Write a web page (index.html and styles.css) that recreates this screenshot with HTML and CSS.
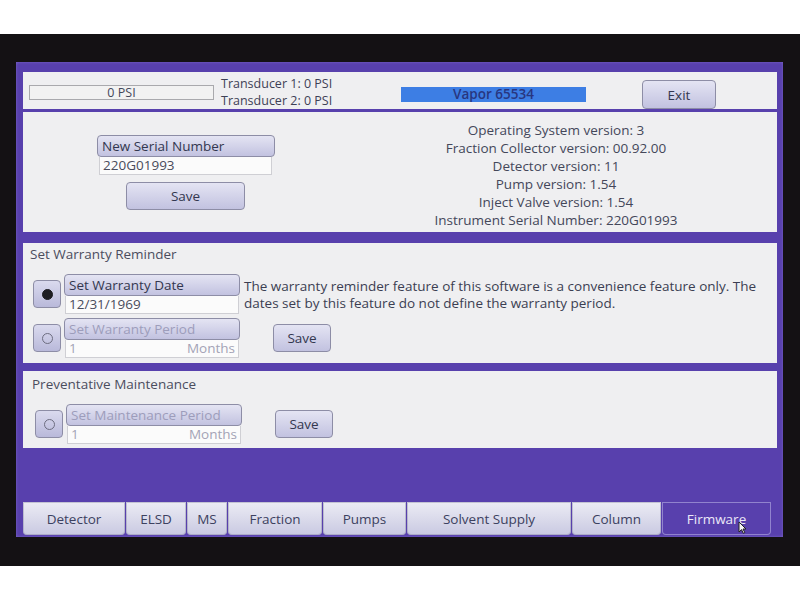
FILE: index.html
```html
<!DOCTYPE html>
<html lang="en">
<head>
  <meta charset="UTF-8">
  <meta name="viewport" content="width=device-width, initial-scale=1.0">
  <title>Firmware</title>
  <link rel="stylesheet" href="styles.css">
</head>
<body>
  <div class="bezel">
    <div class="screen">

      <div class="panel top-bar">
        <div class="psi-box">0 PSI</div>
        <div class="transducers">
          <div>Transducer 1: 0 PSI</div>
          <div>Transducer 2: 0 PSI</div>
        </div>
        <div class="device-name">Vapor 65534</div>
        <button class="btn exit-btn">Exit</button>
      </div>

      <div class="panel serial-panel">
        <div class="serial-form">
          <div class="field-header">New Serial Number</div>
          <div class="field-input serial-input">220G01993</div>
          <button class="btn serial-save">Save</button>
        </div>
        <div class="versions">
          <div>Operating System version: 3</div>
          <div>Fraction Collector version: 00.92.00</div>
          <div>Detector version: 11</div>
          <div>Pump version: 1.54</div>
          <div>Inject Valve version: 1.54</div>
          <div>Instrument Serial Number: 220G01993</div>
        </div>
      </div>

      <div class="panel section warranty-panel">
        <div class="section-title">Set Warranty Reminder</div>
        <div class="option-grid">
          <button class="radio checked"><span class="dot"></span></button>
          <div class="field">
            <div class="field-header">Set Warranty Date</div>
            <div class="field-input">12/31/1969</div>
          </div>
          <p class="note">The warranty reminder feature of this software is a convenience feature only. The<br>dates set by this feature do not define the warranty period.</p>

          <button class="radio"><span class="dot"></span></button>
          <div class="field">
            <div class="field-header disabled">Set Warranty Period</div>
            <div class="field-input disabled"><span>1</span><span>Months</span></div>
          </div>
          <button class="btn small-save">Save</button>
        </div>
      </div>

      <div class="panel section maintenance-panel">
        <div class="section-title">Preventative Maintenance</div>
        <div class="option-grid">
          <button class="radio"><span class="dot"></span></button>
          <div class="field">
            <div class="field-header disabled">Set Maintenance Period</div>
            <div class="field-input disabled"><span>1</span><span>Months</span></div>
          </div>
          <button class="btn small-save">Save</button>
        </div>
      </div>

      <nav class="tabs">
        <div class="tab tab-detector">Detector</div>
        <div class="tab tab-elsd">ELSD</div>
        <div class="tab tab-ms">MS</div>
        <div class="tab tab-fraction">Fraction</div>
        <div class="tab tab-pumps">Pumps</div>
        <div class="tab tab-solvent">Solvent Supply</div>
        <div class="tab tab-column">Column</div>
        <div class="tab tab-firmware active">
          Firmware
          <svg class="pointer" width="9" height="13" viewBox="0 0 9 13">
            <path d="M1 1 L1 11 L3.5 8.6 L5.3 12.3 L6.8 11.6 L5 8 L8 8 Z" fill="#f4f4f4" stroke="#222" stroke-width="1"/>
          </svg>
        </div>
      </nav>

    </div>
  </div>
</body>
</html>
```

FILE: styles.css
```css
:root {
  --screen-purple: #5840ad;
  --panel-bg: #efeff1;
  --text-color: #3e4156;
  --button-top: #e4e4f3;
  --button-bottom: #c2c2e0;
  --button-border: #8d8da6;
}

* {
  box-sizing: border-box;
}

body {
  margin: 0;
  background: #ffffff;
  font-family: 'Open Sans', 'DejaVu Sans', sans-serif;
  font-size: 13.5px;
  color: var(--text-color);
}

.bezel {
  margin-top: 34px;
  height: 532px;
  background: #141114;
  padding: 28px 17px 29px 16px;
}

.screen {
  position: relative;
  height: 475px;
  background: var(--screen-purple);
  padding: 10px 6px 2px 7px;
  display: flex;
  flex-direction: column;
  box-shadow: inset 0 0 3px rgba(150, 130, 220, 0.6);
}

.panel {
  background: var(--panel-bg);
}

/* buttons share the lavender touch-screen look */
.btn {
  font-family: inherit;
  font-size: 13.5px;
  color: #33374f;
  background: linear-gradient(180deg, var(--button-top) 0%, var(--button-bottom) 100%);
  border: 1px solid var(--button-border);
  border-radius: 4px;
  padding: 0;
  cursor: pointer;
}

/* top status bar */
.top-bar {
  height: 37px;
  display: flex;
  align-items: center;
  padding-left: 6px;
}

.psi-box {
  width: 185px;
  height: 15px;
  margin-top: 4px;
  border: 1px solid #a9a9ad;
  background: #f2f2f2;
  text-align: center;
  font-size: 12.5px;
  line-height: 13px;
  color: #45475a;
}

.transducers {
  width: 180px;
  margin-left: 7px;
  margin-top: 2px;
  font-size: 12.5px;
  line-height: 17px;
}

.device-name {
  width: 185px;
  height: 15px;
  margin-top: 8px;
  background: #3d7ee4;
  color: #283680;
  text-align: center;
  font-weight: 600;
  line-height: 15px;
}

.exit-btn {
  width: 74px;
  height: 29px;
  margin-left: 56px;
  margin-top: 8px;
}

/* serial number + versions */
.serial-panel {
  height: 120px;
  margin-top: 3px;
  display: flex;
}

.serial-form {
  width: 178px;
  margin-left: 74px;
  padding-top: 23px;
}

.field-header {
  height: 22px;
  padding-left: 4px;
  line-height: 20px;
  color: #33374f;
  white-space: nowrap;
  background: linear-gradient(180deg, var(--button-top) 0%, var(--button-bottom) 100%);
  border: 1px solid var(--button-border);
  border-radius: 4px;
}

.field-header.disabled {
  color: #9d9dbb;
}

.field-input {
  height: 18px;
  margin: 0 2px;
  padding: 0 3px;
  background: #fbfbfb;
  border: 1px solid #cfcfd4;
  border-top: none;
  line-height: 16px;
  color: #4a4c5c;
  display: flex;
  justify-content: space-between;
}

.field-input.disabled {
  color: #a3a3b6;
}

.serial-input {
  width: 173px;
}

.serial-save {
  display: block;
  width: 119px;
  height: 28px;
  margin: 7px 0 0 29px;
}

.versions {
  flex: 1;
  margin-left: 60px;
  padding-top: 9px;
  text-align: center;
  line-height: 18px;
  color: #44475a;
}

/* warranty and maintenance sections */
.section {
  padding: 2px 0 7px 7px;
}

.warranty-panel {
  height: 120px;
  margin-top: 11px;
}

.maintenance-panel {
  height: 77px;
  margin-top: 8px;
  padding-top: 4px;
  padding-left: 9px;
}

.section-title {
  line-height: 18px;
  color: #4b4d5e;
}

.option-grid {
  margin-top: 11px;
  display: grid;
  grid-template-columns: 28px 176px 1fr;
  column-gap: 3px;
  row-gap: 4px;
  align-items: center;
  padding-left: 3px;
}

.radio {
  width: 28px;
  height: 28px;
  padding: 0;
  background: linear-gradient(180deg, #dadaee 0%, #b9b9da 100%);
  border: 1px solid var(--button-border);
  border-radius: 4px;
  display: flex;
  align-items: center;
  justify-content: center;
}

.radio .dot {
  width: 11px;
  height: 11px;
  border-radius: 50%;
  border: 1px solid #6d6d80;
}

.radio.checked .dot {
  background: #1d1d22;
  border-color: #1d1d22;
}

.field .field-input {
  margin: 0 1px;
}

.note {
  margin: 4px 0 0 1px;
  align-self: start;
  line-height: 17px;
  white-space: nowrap;
  color: #3b3e52;
}

.small-save {
  justify-self: start;
  width: 58px;
  height: 28px;
  margin-left: 30px;
}

/* bottom navigation */
.tabs {
  margin-top: auto;
  display: flex;
  gap: 1px;
  height: 33px;
}

.tab {
  position: relative;
  display: flex;
  align-items: center;
  justify-content: center;
  padding-top: 1px;
  color: #3c4160;
  background: linear-gradient(180deg, #ececf4 0%, #c9c9e2 100%);
  border-radius: 0 0 4px 4px;
  box-shadow: inset 0 0 0 1px rgba(120, 120, 150, 0.35);
}

.tab-detector { width: 102px; }
.tab-elsd { width: 60px; }
.tab-ms { width: 40px; }
.tab-fraction { width: 94px; }
.tab-pumps { width: 83px; }
.tab-solvent { width: 164px; }
.tab-column { width: 89px; }
.tab-firmware { width: 109px; }

.tab.active {
  background: var(--screen-purple);
  color: #ebe8f8;
  box-shadow: inset 0 0 0 1px rgba(170, 160, 220, 0.7);
}

.pointer {
  position: absolute;
  left: 76px;
  top: 19px;
}
```
